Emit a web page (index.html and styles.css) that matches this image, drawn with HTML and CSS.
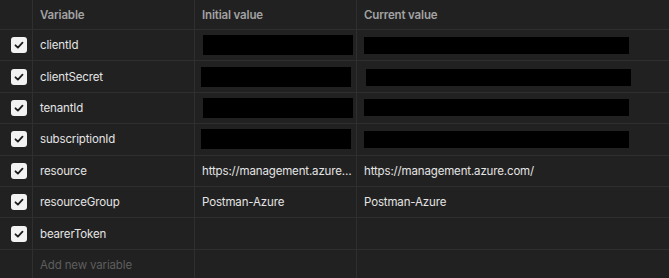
FILE: index.html
```html
<!DOCTYPE html>
<html lang="en">

<head>
    <meta charset="UTF-8">
    <meta name="viewport" content="width=device-width, initial-scale=1.0">
    <link rel="stylesheet" href="styles.css">
    <title>Environment variables</title>
</head>

<body>

    <div class="vars-table">

        <div class="vars-row vars-head">
            <div class="cell cell-check"></div>
            <div class="cell">Variable</div>
            <div class="cell">Initial value</div>
            <div class="cell">Current value</div>
        </div>

        <div class="vars-row">
            <div class="cell cell-check"><span class="checkbox"><svg viewBox="0 0 16 16"><path d="M4.5 8.3l2.4 2.3 4.6-5"/></svg></span></div>
            <div class="cell">clientId</div>
            <div class="cell"><span class="redact redact-init r1"></span></div>
            <div class="cell"><span class="redact redact-cur r1"></span></div>
        </div>

        <div class="vars-row">
            <div class="cell cell-check"><span class="checkbox"><svg viewBox="0 0 16 16"><path d="M4.5 8.3l2.4 2.3 4.6-5"/></svg></span></div>
            <div class="cell">clientSecret</div>
            <div class="cell"><span class="redact redact-init r2"></span></div>
            <div class="cell"><span class="redact redact-cur r2"></span></div>
        </div>

        <div class="vars-row">
            <div class="cell cell-check"><span class="checkbox"><svg viewBox="0 0 16 16"><path d="M4.5 8.3l2.4 2.3 4.6-5"/></svg></span></div>
            <div class="cell">tenantId</div>
            <div class="cell"><span class="redact redact-init r1"></span></div>
            <div class="cell"><span class="redact redact-cur r1"></span></div>
        </div>

        <div class="vars-row">
            <div class="cell cell-check"><span class="checkbox"><svg viewBox="0 0 16 16"><path d="M4.5 8.3l2.4 2.3 4.6-5"/></svg></span></div>
            <div class="cell">subscriptionId</div>
            <div class="cell"><span class="redact redact-init r2"></span></div>
            <div class="cell"><span class="redact redact-cur r1"></span></div>
        </div>

        <div class="vars-row">
            <div class="cell cell-check"><span class="checkbox"><svg viewBox="0 0 16 16"><path d="M4.5 8.3l2.4 2.3 4.6-5"/></svg></span></div>
            <div class="cell">resource</div>
            <div class="cell"><span class="ellipsis">https://management.azure.com/</span></div>
            <div class="cell">https://management.azure.com/</div>
        </div>

        <div class="vars-row">
            <div class="cell cell-check"><span class="checkbox"><svg viewBox="0 0 16 16"><path d="M4.5 8.3l2.4 2.3 4.6-5"/></svg></span></div>
            <div class="cell">resourceGroup</div>
            <div class="cell">Postman-Azure</div>
            <div class="cell">Postman-Azure</div>
        </div>

        <div class="vars-row">
            <div class="cell cell-check"><span class="checkbox"><svg viewBox="0 0 16 16"><path d="M4.5 8.3l2.4 2.3 4.6-5"/></svg></span></div>
            <div class="cell">bearerToken</div>
            <div class="cell"></div>
            <div class="cell"></div>
        </div>

        <div class="vars-row">
            <div class="cell cell-check"></div>
            <div class="cell placeholder">Add new variable</div>
            <div class="cell"></div>
            <div class="cell"></div>
        </div>

    </div>

</body>

</html>
```

FILE: styles.css
```css
body {
    margin: 0;
    padding: 0;
    background-color: #212121;
    font-family: Inter, "Noto Sans", sans-serif;
    font-size: 11.5px;
    letter-spacing: -0.15px;
    color: #e4e4e4;
    overflow: hidden;
}

.vars-table {
    display: flex;
    flex-direction: column;
}

.vars-row {
    display: grid;
    grid-template-columns: 33px 162px 162px 1fr;
    height: 31.4px;
    border-bottom: 1px solid #2f2f2f;
    box-sizing: border-box;
}

.vars-head {
    height: 30px;
    color: #a3a3a3;
    font-weight: 600;
}

.cell {
    display: flex;
    align-items: center;
    padding-left: 7px;
    border-right: 1px solid #2f2f2f;
    white-space: nowrap;
    overflow: hidden;
}

.cell:last-child {
    border-right: none;
}

.cell-check {
    padding-left: 11px;
}

.checkbox {
    display: flex;
    width: 16px;
    height: 16px;
    background-color: #f2f2f2;
    border-radius: 3px;
}

.checkbox svg {
    width: 16px;
    height: 16px;
    fill: none;
    stroke: #1c1c1c;
    stroke-width: 1.8;
    stroke-linecap: round;
    stroke-linejoin: round;
}

.redact {
    display: block;
    background-color: #000;
}

.redact-init {
    width: 150px;
    height: 20px;
}

.redact-init.r1 {
    margin-left: 1px;
}

.redact-init.r2 {
    margin-left: -1px;
}

.redact-cur {
    width: 265px;
    height: 17px;
}

.redact-cur.r2 {
    margin-left: 2px;
    margin-top: 2px;
}

.ellipsis {
    display: block;
    width: 150px;
    overflow: hidden;
    text-overflow: ellipsis;
}

.placeholder {
    color: #5e5e5e;
}
```
